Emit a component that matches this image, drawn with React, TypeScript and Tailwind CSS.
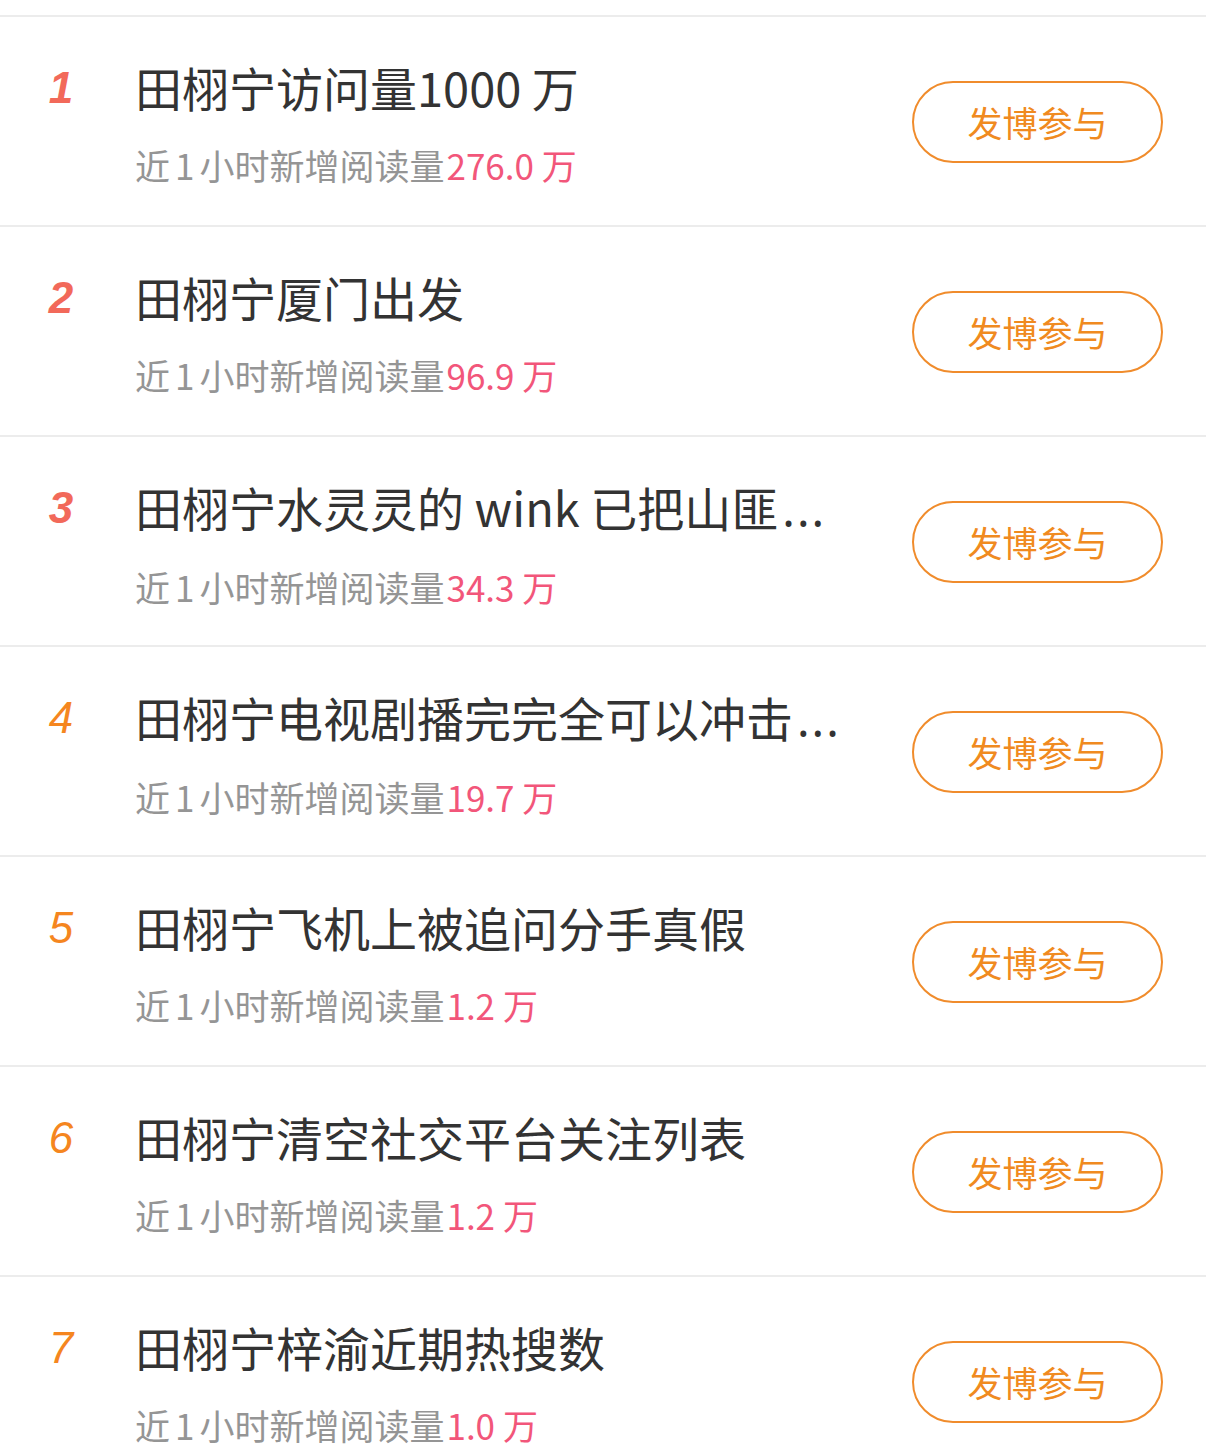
const topics = [
  { rank: 1, title: "田栩宁访问量1000 万", more: false, reads: "276.0 万" },
  { rank: 2, title: "田栩宁厦门出发", more: false, reads: "96.9 万" },
  { rank: 3, title: "田栩宁水灵灵的 wink 已把山匪", more: true, reads: "34.3 万" },
  { rank: 4, title: "田栩宁电视剧播完完全可以冲击", more: true, reads: "19.7 万" },
  { rank: 5, title: "田栩宁飞机上被追问分手真假", more: false, reads: "1.2 万" },
  { rank: 6, title: "田栩宁清空社交平台关注列表", more: false, reads: "1.2 万" },
  { rank: 7, title: "田栩宁梓渝近期热搜数", more: false, reads: "1.0 万" },
];

const cjk = { fontFamily: '"Noto Sans CJK SC", "Noto Sans", sans-serif' };
const latin = { fontFamily: '"Noto Sans", "Liberation Sans", sans-serif' };

const App = () => {
  return (
    <div className="w-[1206px] bg-white" style={cjk}>
      <div className="h-[17px] border-b-2 border-[#ececec]" />
      {topics.map((t) => (
        <div key={t.rank} className="flex h-[210px] items-start border-b-2 border-[#ececec]">
          {/* Rank */}
          <div
            className={`w-[122px] shrink-0 pt-[43px] text-center text-[44px] italic leading-[56px] ${
              t.rank <= 3 ? "font-bold text-[#f2695a]" : "text-[#f5861f]"
            }`}
            style={{ fontFamily: '"Liberation Sans", Arial, sans-serif' }}
          >
            {t.rank}
          </div>

          {/* Content */}
          <div className="min-w-0 flex-1 pl-[13px] pt-[42px]">
            <div className="whitespace-nowrap text-[47px] leading-[56px] text-[#333333]">
              {t.title}
              {t.more && (
                <span className="ml-[4px] tracking-[2px]" style={latin}>
                  ...
                </span>
              )}
            </div>
            <div className="mt-[28px] whitespace-nowrap text-[35px] leading-[44px] text-[#959595]">
              近<span className="mx-[5px]">1</span>小时新增阅读量
              <span className="ml-[2px] text-[#f2567a]">{t.reads}</span>
            </div>
          </div>

          {/* Button */}
          <div className="mr-[43px] flex h-[210px] shrink-0 items-center">
            <button className="flex h-[82px] w-[251px] items-center justify-center rounded-full border-2 border-[#f08c2c] text-[35px] text-[#f08a20]">
              发博参与
            </button>
          </div>
        </div>
      ))}
    </div>
  );
};

export default App;
